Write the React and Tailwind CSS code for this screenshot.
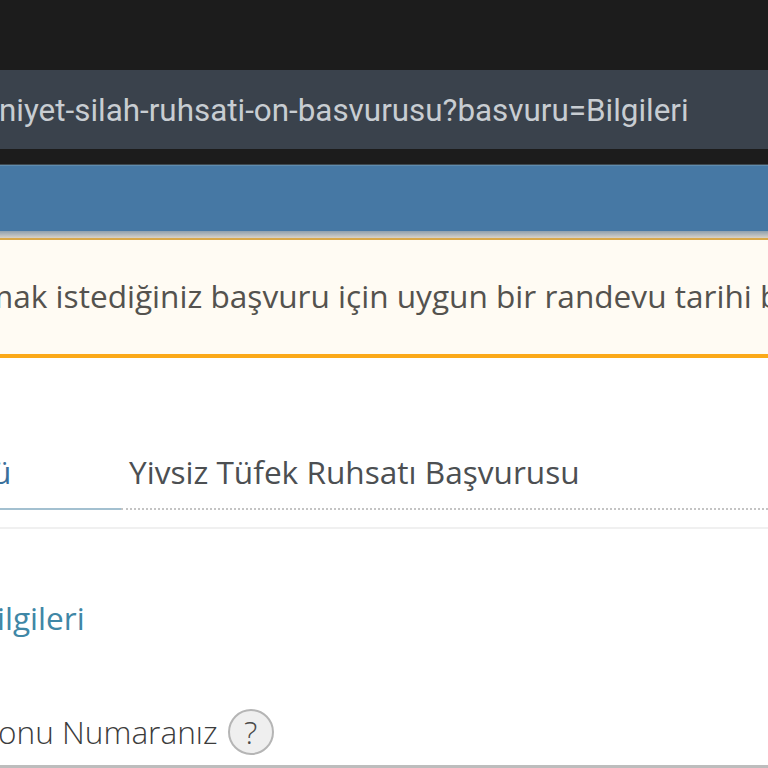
const App = () => {
    return (
        <div className="w-[768px] h-[768px] overflow-hidden bg-white flex flex-col font-['Open_Sans',sans-serif]">
            {/* browser chrome */}
            <div className="h-[70px] shrink-0 bg-[#1c1c1c]" />
            <div className="h-[79px] shrink-0 bg-[#3a424c] flex items-center overflow-hidden">
                <span className="font-['Roboto',sans-serif] text-[31.4px] leading-none text-[#c8cdd2] whitespace-nowrap -ml-[1px] pt-[2px]">
                    niyet-silah-ruhsati-on-basvurusu?basvuru=Bilgileri
                </span>
            </div>
            <div className="h-[16px] shrink-0 bg-[#1c1c1c] border-b border-[#3f4a52]" />

            {/* site header */}
            <div className="h-[66px] shrink-0 bg-[#4678a4] border-t border-[#5f8cae]" />
            <div className="h-[7px] shrink-0 bg-gradient-to-b from-[#8fa0ad] to-[#d8d2c8]" />

            {/* warning */}
            <div className="h-[120px] shrink-0 bg-[#fffbf3] border-t-2 border-t-[#d9a94a] border-b-[4px] border-b-[#fba919] flex items-center overflow-hidden">
                <span className="text-[31.6px] leading-none text-[#54524e] whitespace-nowrap -ml-[16px] pb-[3px]">
                    mak istediğiniz başvuru için uygun bir randevu tarihi bulunmamaktadır
                </span>
            </div>

            {/* tabs */}
            <div className="mt-[80px] h-[72px] shrink-0 flex">
                <div className="w-[121px] shrink-0 border-b-2 border-[#a3c0d0] flex items-center overflow-hidden">
                    <span className="text-[31.6px] leading-none text-[#3a6f9b] whitespace-nowrap -ml-[8px] pb-[2px]">ü</span>
                </div>
                <div className="flex-1 border-b-2 border-dotted border-[#c4c4c4] flex items-center pl-[8px]">
                    <span className="text-[31.6px] leading-none text-[#4c4f52] whitespace-nowrap pb-[2px]">
                        Yivsiz Tüfek Ruhsatı Başvurusu
                    </span>
                </div>
            </div>
            <div className="mt-[17px] h-[2px] shrink-0 bg-[#f0f0f0]" />

            {/* section title */}
            <div className="mt-[68px] h-[42px] shrink-0 flex items-center overflow-hidden">
                <span className="text-[31.6px] leading-none text-[#3f87a6] whitespace-nowrap -ml-[3px]">ilgileri</span>
            </div>

            {/* field label */}
            <div className="mt-[69px] h-[48px] shrink-0 flex items-center gap-[10px] overflow-hidden">
                <span className="text-[31.6px] leading-none font-light text-[#3c3c3c] whitespace-nowrap -ml-[2px]">onu Numaranız</span>
                <span className="w-[46px] h-[46px] shrink-0 rounded-full bg-[#efefef] border-2 border-[#b5b5b5] flex items-center justify-center text-[31.6px] leading-none font-light text-[#4a4a4a]">
                    ?
                </span>
            </div>
            <div className="mt-[9px] h-[3px] shrink-0 bg-[#bdbdbd]" />
        </div>
    );
};

export default App;
